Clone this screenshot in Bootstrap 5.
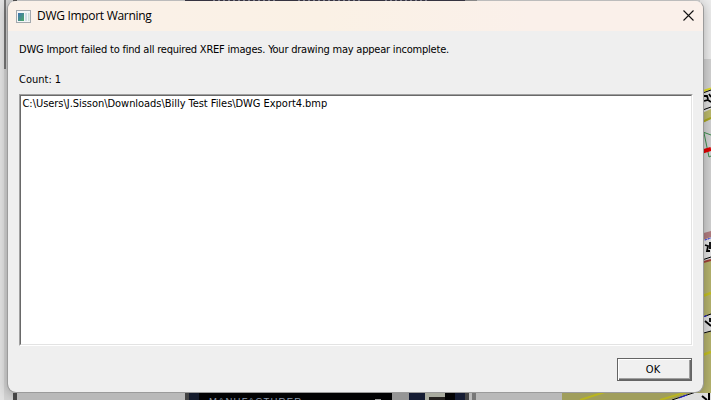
<!DOCTYPE html>
<html lang="en">
<head>
<meta charset="utf-8">
<title>DWG Import Warning</title>
<link href="https://cdn.jsdelivr.net/npm/bootstrap@5.3.0/dist/css/bootstrap.min.css" rel="stylesheet">
<style>
html,body{height:100%;overflow:hidden}
body{background:#d0d0d0;color:#000;font:11px/13px "DejaVu Sans Condensed","Noto Sans",sans-serif}
.scene{left:0;top:0;z-index:0}
.scene-front{z-index:2}
.dialog{width:697px;height:393px;margin-left:7px;background:#efefef;background-clip:padding-box;border:1px solid #9b9b9b;border-top-color:transparent;border-radius:9px;z-index:1;box-shadow:0 2px 12px rgba(0,0,0,.28)}
.titlebar{height:30px;background:linear-gradient(90deg,#faf1e9 0,#faf1e5 45%,#faf0ea 75%);padding:0 9px 0 8px}
.title-text{font:12px/16px "Open Sans","Noto Sans",sans-serif;margin-left:6px;letter-spacing:-.3px}
.close-x{margin-bottom:2px}
.content-area{padding:12px 11px 11px}
.message{letter-spacing:-.21px}
.count{margin:17px 0 8px}
.listbox{height:252px;margin-right:-1px;background:#fff;border:1px solid;border-color:#a0a0a0 #fff #fff #a0a0a0}
.listbox-in{border:1px solid;border-color:#696969 #e3e3e3 #e3e3e3 #696969;padding:1px 1.5px;letter-spacing:-.04px}
.okbtn{width:75px;height:23px;margin-top:12px;padding:0 3px 0 0;background:#f0f0f0;border:1px solid #646464;border-radius:0;font:inherit;color:#000;box-shadow:inset 1px 1px #fff,inset -1px -1px #696969,inset -2px -2px #a0a0a0}
</style>
</head>
<body class="position-relative">
<svg class="scene position-absolute" width="711" height="400" viewBox="0 0 711 400">
  <rect width="711" height="400" fill="#d4d4d4"/>
  <rect width="4" height="400" fill="#e2e2e2"/>
  <rect x="4" width="2" height="69" fill="#777"/>
  <rect x="13" width="4" height="3" fill="#555"/>
  <rect x="185" width="290" height="1" fill="#3c3a48"/>
  <path d="M213 .5H275M298 .5H362M385 .5H430" stroke="#8c8c9c" stroke-dasharray="2 3"/>
  <rect x="465" width="12" height="1" fill="#999"/>
  <rect x="700" width="11" height="59" fill="#ececec"/>
  <rect x="700" y="59" width="11" height="200" fill="#d2d2d2"/>
  <!-- site plan to the right of the dialog -->
  <path d="M700 91L711 88V112L700 117Z" fill="#dedede"/>
  <path d="M700 114L711 109V119L700 124Z" fill="#bbb96c"/>
  <path d="M700 123L711 118" stroke="#aaa820" stroke-width="2"/>
  <path d="M700 92L711 88.500" stroke="#e0dc20" stroke-width="2"/>
  <path d="M700 94L711 90M700 111L711 107" stroke="#000" fill="none"/>
  <path d="M704 96l3 0 1 3M704 101l4-1 3 2M709 94l2 3" stroke="#000" stroke-width="1.800" fill="none"/>
  <path d="M703 132L711 135M704 133L709 157L711 156" stroke="#3c8f4e" fill="none"/>
  <path d="M701 152L711 149" stroke="#e00000" stroke-width="4"/>
  <path d="M700 234L711 231V237L700 241Z" fill="#b27d80"/>
  <path d="M700 242L711 238V258L700 261Z" fill="#e4e4e4"/>
  <path d="M702 241L711 238" stroke="#2020e0" stroke-dasharray="2 1"/>
  <path d="M705 245l3 1-1 5 3 0M710 242v7" stroke="#000" stroke-width="1.800" fill="none"/>
  <path d="M702 260L711 257" stroke="#000"/>
  <path d="M700 264L711 260V400H562V392H700Z" fill="#b5b36d"/>
  <path d="M700 263L711 260" stroke="#a04038" stroke-width="2"/>
  <path d="M700 297L711 293M700 356L711 352" stroke="#c4c020" stroke-width="2.500"/>
  <path d="M700 319L711 314V331L703 334Z" fill="#dedede"/>
  <path d="M700 318L711 314M702 333.500L711 331" stroke="#000"/>
  <path d="M703 317L707 315.500" stroke="#2020e0"/>
  <path d="M705 321l6 5M710 318v4" stroke="#000" stroke-width="1.800"/>
</svg>
<svg class="scene scene-front position-absolute" width="711" height="400" viewBox="0 0 711 400">
  <defs><clipPath id="below"><rect y="393" width="711" height="7"/></clipPath></defs>
  <g clip-path="url(#below)">
    <rect y="392" x="17" width="545" height="8" fill="#b9b9b9"/>
    <rect y="392" x="13" width="4" height="8" fill="#454545"/>
    <rect y="392" x="185" width="4" height="8" fill="#444"/>
    <rect y="392" x="189" width="10" height="8" fill="#141b2c"/>
    <rect y="392" x="199" width="193" height="8" fill="#020203"/>
    <rect y="392" x="392" width="17" height="8" fill="#969696"/>
    <rect y="392" x="409" width="60" height="8" fill="#151c33"/>
    <rect y="392" x="425" width="20" height="8" fill="#a9ab9f"/>
    <rect y="397" x="429" width="16" height="3" fill="#24211f"/>
    <rect y="392" x="445" width="10" height="8" fill="#020203"/>
    <rect y="392" x="465" width="4" height="8" fill="#444"/>
    <rect y="392" x="472" width="4" height="8" fill="#777"/>
    <rect y="399" x="375" width="6" height="1" fill="#999"/>
    <text x="209" y="403.500" font-family="Liberation Sans" font-size="9.500" textLength="92" fill="#8d9bb0">MANUFACTURER</text>
    <path d="M562 393H711V400H562Z" fill="#a09e5c"/>
    <path d="M580 400L605 392M660 400L690 391" stroke="#b9b520" stroke-width="2"/>
    <path d="M672 400L711 386V400Z" fill="#dedede"/>
    <path d="M672 400L711 387" stroke="#000"/>
    <path d="M679 398L687 395" stroke="#2020e0"/>
    <path d="M702 396l5 4M709 393v7" stroke="#000" stroke-width="2"/>
  </g>
</svg>
<main class="dialog position-relative overflow-hidden">
  <header class="titlebar d-flex align-items-center">
    <svg width="15" height="13" viewBox="0 0 15 13">
      <defs><linearGradient id="app" x2="1" y2="1"><stop stop-color="#3f74b4"/><stop offset="1" stop-color="#4ba866"/></linearGradient></defs>
      <rect x=".5" y=".5" width="14" height="12" fill="#f4f6f7" stroke="#a3a9ae"/>
      <rect x="2" y="3" width="6" height="8" fill="url(#app)"/>
      <rect x="9" y="3" width="2" height="8" fill="#cfdde6"/><rect x="12" y="3" width="1.500" height="8" fill="#cfe0dc"/>
    </svg>
    <span class="title-text">DWG Import Warning</span>
    <svg class="close-x ms-auto" width="11" height="11" viewBox="0 0 11 11"><path d="M.5.500l10 10M10.500.500l-10 10" stroke="#111" stroke-width="1.100"/></svg>
  </header>
  <section class="content-area d-flex flex-column">
    <div class="message text-nowrap">DWG Import failed to find all required XREF images. Your drawing may appear incomplete.</div>
    <div class="count">Count: 1</div>
    <div class="listbox d-flex"><div class="listbox-in flex-fill">C:\Users\J.Sisson\Downloads\Billy Test Files\DWG Export4.bmp</div></div>
    <button type="button" class="btn okbtn align-self-end">OK</button>
  </section>
</main>
</body>
</html>
